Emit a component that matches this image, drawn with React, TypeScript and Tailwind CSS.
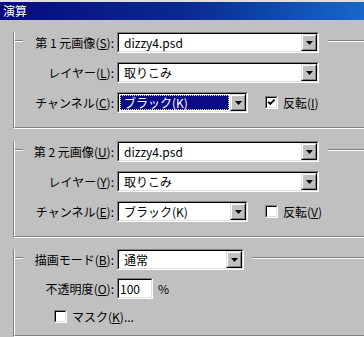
import React from "react";

const Etched: React.FC<{ className?: string }> = ({ className = "" }) => (
  <div className={`h-0 border-t border-b border-t-[#808080] border-b-white ${className}`} />
);

const DropButton: React.FC = () => (
  <div className="flex w-[16px] items-center justify-center border border-t-[#dfdfdf] border-l-[#dfdfdf] border-r-black border-b-black bg-[#c0c0c0]">
    <div className="flex h-full w-full items-center justify-center border border-t-white border-l-white border-r-[#808080] border-b-[#808080]">
      <svg width="7" height="4" viewBox="0 0 7 4">
        <polygon points="0,0 7,0 3.5,4" fill="#000" />
      </svg>
    </div>
  </div>
);

const Combo: React.FC<{ value: string; width: string; selected?: boolean }> = ({ value, width, selected }) => (
  <div className={`flex h-[21px] ${width} border border-t-[#808080] border-l-[#808080] border-r-white border-b-white`}>
    <div className="flex flex-1 border border-t-black border-l-black border-r-[#dfdfdf] border-b-[#dfdfdf] bg-white">
      <div className="flex flex-1 p-px">
        {selected ? (
          <div className="flex flex-1 items-center border border-dotted border-[#e8e070] bg-[#0a0a84] text-white">
            <span className="pl-[3px]">{value}</span>
          </div>
        ) : (
          <div className="flex flex-1 items-center">
            <span className="pl-[4px]">{value}</span>
          </div>
        )}
      </div>
      <DropButton />
    </div>
  </div>
);

const CheckBox: React.FC<{ checked?: boolean }> = ({ checked }) => (
  <div className="h-[13px] w-[13px] border border-t-[#808080] border-l-[#808080] border-r-white border-b-white">
    <div className="flex h-full w-full items-center justify-center border border-t-black border-l-black border-r-[#dfdfdf] border-b-[#dfdfdf] bg-white">
      {checked && (
        <svg width="9" height="9" viewBox="0 0 9 9">
          <path d="M1.2 3.8 L3.3 6 L7.6 1.6" stroke="#000" strokeWidth="1.9" fill="none" />
        </svg>
      )}
    </div>
  </div>
);

const Label: React.FC<{ text: string; mn: string; first?: boolean }> = ({ text, mn, first }) => (
  <div className="flex h-[21px] w-[102px] items-center">
    {first && <Etched className="w-[8px] self-start mt-[8px]" />}
    <span className="flex-1 whitespace-nowrap pr-[3px] text-right">
      {text}(<u>{mn}</u>):
    </span>
  </div>
);

const SourceGroup: React.FC<{ n: string; keys: [string, string, string, string]; checked?: boolean; selected?: boolean; top: string }> = ({
  n,
  keys,
  checked,
  selected,
  top,
}) => (
  <div className={`ml-[13px] ${top} border-l border-b border-l-[#808080] border-b-white`}>
    <div className="border-l border-b border-l-white border-b-[#808080] pb-[14px]">
      <div className="-mt-[8px] flex items-center">
        <Label text={`第 ${n} 元画像`} mn={keys[0]} first />
        <Combo value="dizzy4.psd" width="w-[202px]" />
        <Etched className="ml-[9px] flex-1 self-start mt-[8px]" />
      </div>
      <div className="mt-[9px] flex items-center">
        <Label text="レイヤー" mn={keys[1]} />
        <Combo value="取りこみ" width="w-[202px]" />
      </div>
      <div className="mt-[9px] flex items-center">
        <Label text="チャンネル" mn={keys[2]} />
        <Combo value="ブラック(K)" width="w-[131px]" selected={selected} />
        <div className="ml-[17px]">
          <CheckBox checked={checked} />
        </div>
        <span className="ml-[5px] whitespace-nowrap">
          反転(<u>{keys[3]}</u>)
        </span>
      </div>
    </div>
  </div>
);

export default function App() {
  return (
    <div className="h-[337px] w-[364px] overflow-hidden bg-[#c0c0c0] font-['Noto_Sans_CJK_JP',sans-serif] text-[12px] leading-none text-black">
      <div className="h-[2px] bg-[#dfdfdf]" />
      <div className="flex h-[18px] items-center bg-linear-to-r from-[#08087e] via-[#0a2890] to-[#1868c8] pl-[3px] text-[12px] text-white">
        演算
      </div>

      <SourceGroup n="1" keys={["S", "L", "C", "I"]} checked selected top="mt-[20px]" />
      <SourceGroup n="2" keys={["U", "Y", "E", "V"]} top="mt-[20px]" />

      <div className="ml-[13px] mt-[19px] border-l border-b border-l-[#808080] border-b-white">
        <div className="border-l border-b border-l-white border-b-[#808080] pb-[8px]">
          <div className="-mt-[8px] flex items-center">
            <Label text="描画モード" mn="B" first />
            <Combo value="通常" width="w-[127px]" />
            <Etched className="ml-[8px] flex-1 self-start mt-[8px]" />
          </div>
          <div className="mt-[8px] flex items-center">
            <Label text="不透明度" mn="O" />
            <div className="flex h-[21px] w-[36px] border border-t-[#808080] border-l-[#808080] border-r-white border-b-white">
              <div className="flex flex-1 items-center border border-t-black border-l-black border-r-[#dfdfdf] border-b-[#dfdfdf] bg-white pl-px">
                100
              </div>
            </div>
            <span className="ml-[5px]">%</span>
          </div>
          <div className="mt-[7px] flex h-[21px] items-center pl-[39px]">
            <CheckBox />
            <span className="ml-[5px] whitespace-nowrap">
              マスク(<u>K</u>)...
            </span>
          </div>
        </div>
      </div>
    </div>
  );
}
